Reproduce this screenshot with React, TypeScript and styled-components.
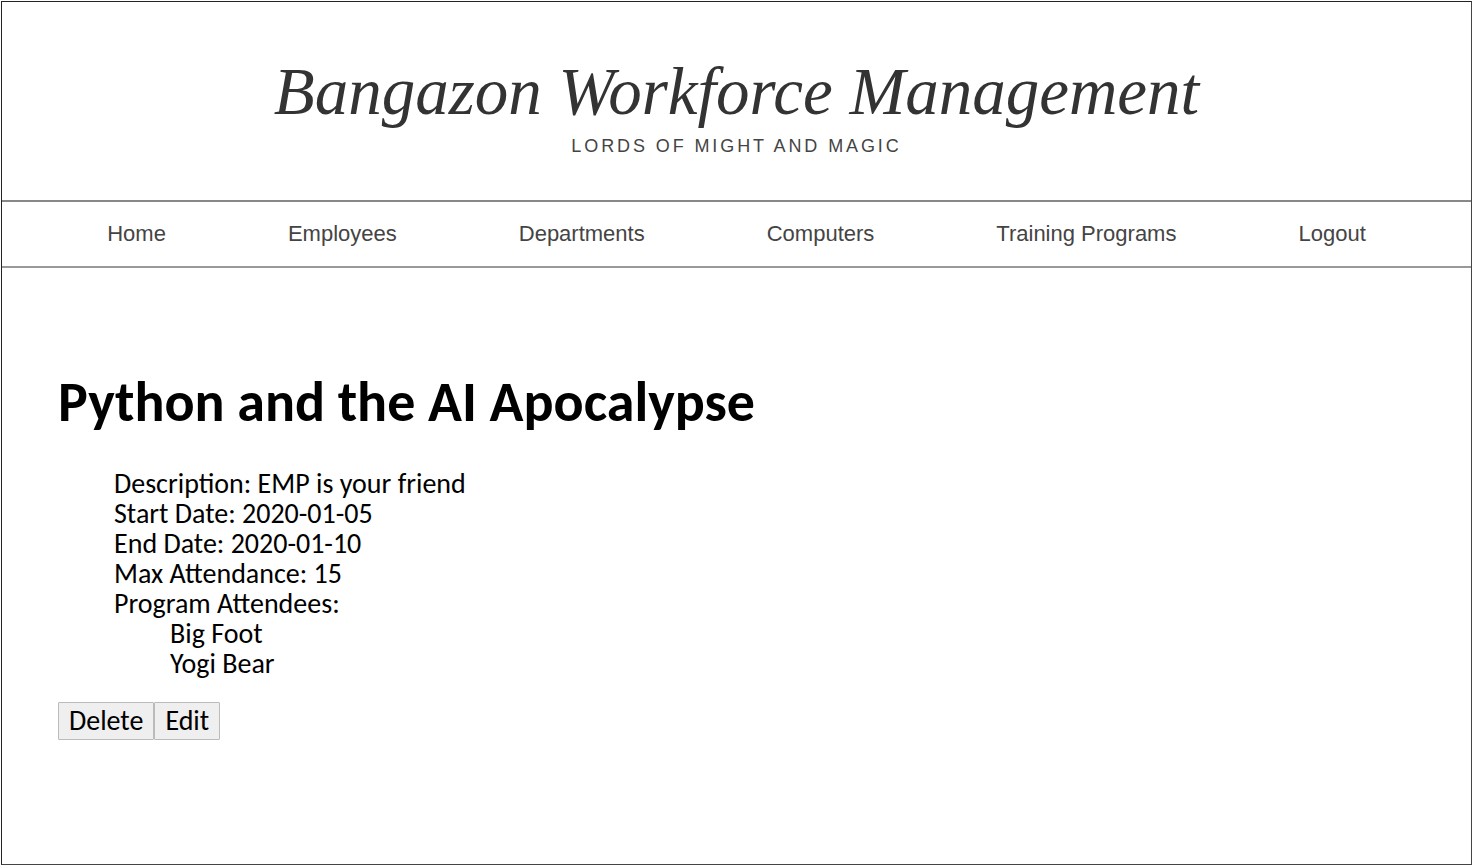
import React from "react";
import styled, { createGlobalStyle } from "styled-components";

const Global = createGlobalStyle`
  html, body { margin: 0; padding: 0; background: #fff; }
  body { font-family: Calibri, Carlito, "Open Sans", "Noto Sans", sans-serif; }
`;

const Frame = styled.div`
  box-sizing: border-box;
  margin: 1px 0 0 1px;
  width: 1471px;
  height: 864px;
  border: 1px solid #222;
  border-right-color: #444;
  border-bottom-color: #444;
  overflow: hidden;
`;

const Header = styled.header`
  height: 198px;
  display: flex;
  flex-direction: column;
  align-items: center;
  box-sizing: border-box;
  padding-top: 51px;
`;

const Title = styled.h1`
  margin: 0;
  font-family: "Liberation Serif", serif;
  font-style: italic;
  font-weight: normal;
  font-size: 67px;
  line-height: 76px;
  color: #333;
  white-space: nowrap;
`;

const Subtitle = styled.div`
  margin-top: 7px;
  font-family: "Liberation Sans", Arial, sans-serif;
  font-size: 18px;
  letter-spacing: 2.9px;
  color: #444;
`;

const Nav = styled.nav`
  height: 64px;
  border-top: 2px solid #888;
  border-bottom: 2px solid #999;
  display: flex;
  justify-content: center;
  align-items: center;
`;

const NavLink = styled.a`
  padding: 0 61px;
  font-family: "Liberation Sans", Arial, sans-serif;
  font-size: 22px;
  color: #444;
  text-decoration: none;
`;

const Main = styled.main`
  padding: 100px 0 0 56px;
`;

const Heading = styled.h2`
  margin: 0;
  font-size: 56px;
  font-weight: bold;
  line-height: 68px;
  color: #000;
`;

const Details = styled.div`
  margin-top: 33px;
  padding-left: 56px;
  font-size: 28px;
  line-height: 30px;
  color: #000;
`;

const Line = styled.div``;

const Attendee = styled.div`
  padding-left: 56px;
`;

const Buttons = styled.div`
  display: flex;
  margin-top: 23px;
`;

const Button = styled.button`
  font-family: inherit;
  font-size: 28px;
  line-height: 30px;
  padding: 3px 10px;
  background: #efefef;
  border: 1px solid #bbb;
  border-radius: 1px;
  color: #000;
`;

const links = ["Home", "Employees", "Departments", "Computers", "Training Programs", "Logout"];

export default function App() {
  return (
    <>
      <Global />
      <Frame>
        <Header>
          <Title>Bangazon Workforce Management</Title>
          <Subtitle>LORDS OF MIGHT AND MAGIC</Subtitle>
        </Header>
        <Nav>
          {links.map((l) => (
            <NavLink key={l} href="#">{l}</NavLink>
          ))}
        </Nav>
        <Main>
          <Heading>Python and the AI Apocalypse</Heading>
          <Details>
            <Line>Description: EMP is your friend</Line>
            <Line>Start Date: 2020-01-05</Line>
            <Line>End Date: 2020-01-10</Line>
            <Line>Max Attendance: 15</Line>
            <Line>Program Attendees:</Line>
            <Attendee>Big Foot</Attendee>
            <Attendee>Yogi Bear</Attendee>
          </Details>
          <Buttons>
            <Button>Delete</Button>
            <Button>Edit</Button>
          </Buttons>
        </Main>
      </Frame>
    </>
  );
}
